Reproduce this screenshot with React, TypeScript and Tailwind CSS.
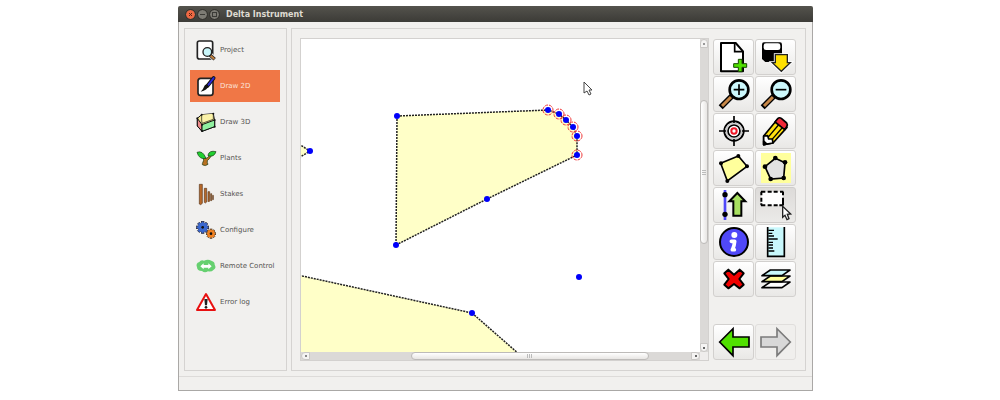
import { useState } from "react";
import type { ReactNode } from "react";

type NavItem = { label: string; icon: ReactNode };
type Tool = { label: string; icon: ReactNode; pressed?: boolean; disabled?: boolean };

const GEAR_ANGLES = Array.from({ length: 8 }, (_, i) => i * 45);

const navItems: NavItem[] = [
  {
    label: "Project",
    icon: (
      <>
        <rect x="4" y="3" width="46" height="54" rx="6" fill="#fff" stroke="#222" strokeWidth="5" />
        <path d="M41 43 L57 59" stroke="#f1f0ee" strokeWidth="15" />
        <path d="M41 44 L56 58" stroke="#222" strokeWidth="10" />
        <path d="M44 47 L55 57" stroke="#c08040" strokeWidth="6" />
        <circle cx="34" cy="36" r="13" fill="#c8f6fa" stroke="#222" strokeWidth="4" />
      </>
    ),
  },
  {
    label: "Draw 2D",
    icon: (
      <>
        <rect x="6" y="7" width="45" height="51" rx="8" fill="#fff" stroke="#222" strokeWidth="5" />
        <path d="M53 6 L34 30" stroke="#111" strokeWidth="11" strokeLinecap="round" />
        <path d="M53 6 L37 27" stroke="#2a2ad8" strokeWidth="6" strokeLinecap="round" />
        <path d="M38 30 Q34 42 14 47 Q22 40 24 32 Q27 24 34 26Z" fill="#111" />
      </>
    ),
  },
  {
    label: "Draw 3D",
    icon: (
      <g stroke="#111" strokeWidth="3" strokeLinejoin="round">
        <path d="M4 19 L17 8 L52 5 L56 27 V44 L18 58 L4 42Z" fill="#f4e890" />
        <path d="M17 8 V24 L18 34 L52 22 V5" fill="#fbf3a8" strokeWidth="2" />
        <path d="M4 19 L18 38 V58 L4 42Z" fill="#ee8c8c" />
        <path d="M18 38 L56 24 V44 L18 58Z" fill="#90f0a0" />
        <g fill="#111" stroke="none">
          <circle cx="4" cy="19" r="3" />
          <circle cx="17" cy="8" r="3" />
          <circle cx="52" cy="5" r="3" />
          <circle cx="56" cy="24" r="3" />
          <circle cx="18" cy="38" r="3" />
          <circle cx="18" cy="57" r="3" />
          <circle cx="56" cy="44" r="3" />
        </g>
      </g>
    ),
  },
  {
    label: "Plants",
    icon: (
      <g stroke="#173a10" strokeWidth="2">
        <path d="M19 47 Q25 38 22 27 L30 31 Q38 30 42 18 L47 22 Q40 34 34 38 Q33 44 36 49 Q28 56 19 50Z" fill="#b87020" />
        <path d="M3 13 Q20 6 30 31 Q10 36 3 13Z" fill="#20d030" />
        <path d="M36 21 Q40 6 60 11 Q54 29 36 23Z" fill="#20d030" />
      </g>
    ),
  },
  {
    label: "Stakes",
    icon: (
      <g fill="#b86828" stroke="#5a3a20" strokeWidth="2">
        <path d="M10 1 H19 V58 L14 62 L10 60Z" />
        <path d="M25 13 H32 V54 L28 57 L25 55Z" />
        <path d="M36 23 H41 V51 L38 54 L36 52Z" />
        <path d="M44 29 H47 V50 H44Z" />
        <path d="M50 34 H52 V47 H50Z" />
      </g>
    ),
  },
  {
    label: "Configure",
    icon: (
      <>
        {GEAR_ANGLES.map((a) => (
          <rect key={a} x="16" y="4" width="8" height="9" fill="#3a64c8" stroke="#223" strokeWidth="2" transform={`rotate(${a} 20 22)`} />
        ))}
        <circle cx="20" cy="22" r="14" fill="#3a68d0" />
        <circle cx="20" cy="22" r="4" fill="#111" />
        {GEAR_ANGLES.map((a) => (
          <rect key={a} x="42" y="27" width="6" height="8" fill="#f08020" stroke="#432" strokeWidth="2" transform={`rotate(${a} 45 41)`} />
        ))}
        <circle cx="45" cy="41" r="11" fill="#f08020" />
        <circle cx="45" cy="41" r="4" fill="#111" />
      </>
    ),
  },
  {
    label: "Remote Control",
    icon: (
      <>
        <path
          d="M10 18 Q14 11 24 14 Q36 8 46 14 Q57 17 56 26 Q62 36 53 41 Q46 49 36 46 Q26 52 18 45 Q3 45 3 34 Q-2 22 10 18Z"
          fill="#66d070"
        />
        <path d="M13 31 L23 22 V27 H37 V22 L47 31 L37 40 V35 H23 V40Z" fill="#fff" />
      </>
    ),
  },
  {
    label: "Error log",
    icon: (
      <>
        <path d="M30 6 L57 54 H3Z" fill="#fff" stroke="#e81010" strokeWidth="6" strokeLinejoin="round" />
        <path d="M25 21 H35 L33 40 H27Z" fill="#222" />
        <circle cx="30" cy="46" r="4" fill="#222" />
      </>
    ),
  },
];

const magnifier = (
  <>
    <path d="M38 52 L5 85" stroke="#000" strokeWidth="17" />
    <path d="M36 54 L9 81" stroke="#c88848" strokeWidth="9" />
    <circle cx="60" cy="32" r="28" fill="#ccf8fc" stroke="#000" strokeWidth="8" />
  </>
);

const leftArrow = "M2 45 L42 5 V30 H90 V60 H42 V86Z";

const tools: Tool[] = [
  {
    label: "New",
    icon: (
      <>
        <path d="M6 3 H50 L72 28 V88 H6Z" fill="#fff" stroke="#000" strokeWidth="6" strokeLinejoin="round" />
        <path d="M47 4 V29 H71" fill="none" stroke="#000" strokeWidth="5" />
        <path d="M58 52 H69 V65 H83 V76 H69 V89 H58 V76 H44 V65 H58Z" fill="#50e000" stroke="#164a00" strokeWidth="3" />
      </>
    ),
  },
  {
    label: "Save",
    icon: (
      <>
        <path d="M3 8 Q3 1 9 1 H57 Q63 1 63 8 V60 H13 L3 51Z" fill="#000" />
        <rect x="8" y="4" width="50" height="20" rx="7" fill="#fff" />
        <path d="M43 38 H79 V62 H88 L61 88 L34 62 H43Z" fill="#ffe000" stroke="#fff" strokeWidth="9" />
        <path d="M43 38 H79 V62 H88 L61 88 L34 62 H43Z" fill="#ffe000" stroke="#222" strokeWidth="4" />
      </>
    ),
  },
  {
    label: "Zoom in",
    icon: (
      <>
        {magnifier}
        <path d="M44 32 H76 M60 16 V48" stroke="#000" strokeWidth="5" />
      </>
    ),
  },
  {
    label: "Zoom out",
    icon: (
      <>
        {magnifier}
        <path d="M44 32 H76" stroke="#000" strokeWidth="5" />
      </>
    ),
  },
  {
    label: "Center view",
    icon: (
      <g fill="none" strokeWidth="5">
        <circle cx="45" cy="45" r="29" fill="#fff" stroke="#000" strokeWidth="6" />
        <circle cx="45" cy="45" r="24" stroke="#ccc" />
        <circle cx="45" cy="45" r="18" stroke="#000" />
        <circle cx="45" cy="45" r="8" stroke="#f01828" strokeWidth="6" />
        <path d="M0 45 H21 M69 45 H90 M45 0 V21 M45 69 V90" stroke="#000" />
      </g>
    ),
  },
  {
    label: "Edit",
    icon: (
      <g stroke="#000" strokeWidth="5" strokeLinejoin="round">
        <path d="M8 86 V60 L50 9 L78 34 L36 81Z" fill="#ffe010" />
        <path d="M21 64 L60 18" strokeWidth="4" />
        <path d="M30 74 L71 27" strokeWidth="4" />
        <path d="M42 18 L50 8 Q55 3 61 7 L77 21 Q81 26 77 32 L71 41Z" fill="#f02838" />
        <path d="M8 86 V60 L20 59 L23 69 L34 69 L36 81Z" fill="#fff" />
        <path d="M8 86 V75 L18 84Z" fill="#000" />
      </g>
    ),
  },
  {
    label: "Polygon",
    icon: (
      <>
        <path d="M5 31 L58 9 L84 40 L25 84Z" fill="#ffff9c" stroke="#000" strokeWidth="5" />
        <circle cx="6" cy="31" r="6" />
        <circle cx="58" cy="9" r="6" />
        <circle cx="84" cy="40" r="6" />
        <circle cx="25" cy="84" r="6" />
      </>
    ),
  },
  {
    label: "Hole",
    icon: (
      <>
        <rect width="90" height="90" fill="#ffff9c" />
        <path d="M43 16 L72 29 L68 75 L29 78 L12 41Z" fill="#e2e2e2" stroke="#000" strokeWidth="5" />
        <circle cx="43" cy="15" r="7" />
        <circle cx="72" cy="28" r="7" />
        <circle cx="68" cy="75" r="7" />
        <circle cx="29" cy="78" r="7" />
        <circle cx="12" cy="41" r="7" />
      </>
    ),
  },
  {
    label: "Move line",
    icon: (
      <>
        <path d="M18 0 V90" stroke="#5048f8" strokeWidth="8" />
        <circle cx="18" cy="14" r="8" />
        <circle cx="18" cy="73" r="8" />
        <path d="M55 9 L79 34 H67 V77 H43 V34 H31Z" fill="#a8e060" stroke="#000" strokeWidth="6" />
      </>
    ),
  },
  {
    label: "Select",
    pressed: true,
    icon: (
      <>
        <rect x="1" y="5" width="65" height="41" fill="#fff" />
        <path
          d="M0 5 H13 M20 5 H32 M38 5 H50 M57 5 H67 M0 46 H13 M20 46 H32 M38 46 H50 M55 46 H67 M1 5 V16 M1 23 V35 M1 40 V46 M66 5 V16 M66 23 V46"
          stroke="#000"
          strokeWidth="6"
        />
        <path d="M65 49 V82 L72 76 L78 89 L84 86 L79 73 L89 72Z" fill="#fff" stroke="#222" strokeWidth="4" />
      </>
    ),
  },
  {
    label: "Info",
    icon: (
      <>
        <circle cx="45" cy="45" r="42" fill="#5048f8" stroke="#000" strokeWidth="6" />
        <circle cx="46" cy="24" r="9" fill="#fff" />
        <path d="M37 43 H47 Q46 56 41 67 M40 68 H46" fill="none" stroke="#fff" strokeWidth="11" strokeLinecap="round" strokeLinejoin="round" />
      </>
    ),
  },
  {
    label: "Measure",
    icon: (
      <>
        <rect x="20" y="1" width="50" height="86" fill="#c8f8fc" />
        <path d="M20 0 V88 H70 V0" fill="none" stroke="#000" strokeWidth="5" />
        <path d="M22 10 H39 M22 19 H34 M22 27 H39 M22 36 H50 M22 46 H36 M22 54 H36 M22 63 H36 M22 72 H40" stroke="#000" strokeWidth="4" />
      </>
    ),
  },
  {
    label: "Delete",
    icon: (
      <path
        d="M28 17 L45 32 L62 17 L74 28 L61 45 L74 62 L62 73 L45 60 L28 73 L16 62 L29 45 L16 28Z"
        fill="#f00000"
        stroke="#000"
        strokeWidth="6"
        strokeLinejoin="round"
      />
    ),
  },
  {
    label: "Layers",
    icon: (
      <g stroke="#000" strokeWidth="5" strokeLinejoin="round">
        <path d="M28 54 H87 L63 71 H3Z" fill="#fff" />
        <path d="M28 36 H87 L63 53 H3Z" fill="#ffff9c" />
        <path d="M28 18 H87 L63 35 H3Z" fill="#c8f8fc" />
      </g>
    ),
  },
];

const history: Tool[] = [
  { label: "Undo", icon: <path d={leftArrow} fill="#50e000" stroke="#000" strokeWidth="5" /> },
  {
    label: "Redo",
    disabled: true,
    icon: <path d={leftArrow} transform="translate(90 0) scale(-1 1)" fill="#d8d8d8" stroke="#7b7b7b" strokeWidth="5" />,
  },
];

const selectedNodes = [[247, 71], [258, 75], [265, 81], [272, 88], [276, 97], [276, 116]];
const plainNodes = [[96, 77], [186, 160], [95, 206], [278, 238], [171, 274], [9, 112]];

function ToolButton({ tool }: { tool: Tool }) {
  return (
    <button
      type="button"
      aria-label={tool.label}
      aria-pressed={tool.pressed}
      disabled={tool.disabled}
      className={
        tool.disabled
          ? "flex h-9 items-center justify-center rounded-[3px] border border-[#e0dedc] bg-[#f0efed]"
          : tool.pressed
            ? "flex h-9 items-center justify-center rounded-[3px] border border-[#cfcdcb] bg-gradient-to-b from-[#dddbd9] to-[#ebeae8]"
            : "flex h-9 items-center justify-center rounded-[3px] border border-[#d2d0ce] bg-gradient-to-b from-white to-[#e9e8e6]"
      }
    >
      <svg viewBox="0 0 90 90" className="size-[30px] overflow-visible">
        {tool.icon}
      </svg>
    </button>
  );
}

function TitleBar() {
  return (
    <header className="flex h-4 items-center gap-[3px] rounded-t-[2px] bg-gradient-to-b from-[#54534d] to-[#3c3b37] px-2">
      <button type="button" aria-label="Close" className="size-[9px] rounded-full bg-[#ee6843] outline outline-[#35332f]">
        <svg viewBox="0 0 9 9" className="size-[9px]">
          <path d="M3 3 L6 6 M6 3 L3 6" stroke="#5a2414" />
        </svg>
      </button>
      <button type="button" aria-label="Minimize" className="size-[9px] rounded-full bg-[#7d7b74] outline outline-[#35332f]">
        <svg viewBox="0 0 9 9" className="size-[9px]">
          <path d="M2 4.500 H7" stroke="#3c3b37" />
        </svg>
      </button>
      <button type="button" aria-label="Maximize" className="size-[9px] rounded-full bg-[#7d7b74] outline outline-[#35332f]">
        <svg viewBox="0 0 9 9" className="size-[9px]">
          <rect x="2.500" y="2.500" width="4" height="4" fill="none" stroke="#3c3b37" />
        </svg>
      </button>
      <h1 className="ml-1 pt-px text-[8px] leading-4 font-bold whitespace-nowrap text-[#dfdbd2]">Delta Instrument</h1>
    </header>
  );
}

function DrawingArea() {
  return (
    <div className="grid min-w-0 flex-1 grid-cols-[1fr_8px] grid-rows-[1fr_8px] bg-[#efedec] outline outline-[#d3d1cf]">
      <div className="relative overflow-hidden bg-white">
        <svg className="absolute inset-0 size-full">
          <g fill="#ffffc8" stroke="#222" strokeWidth="1.500" strokeDasharray="2 1">
            <path d="M96 77 L247 71 L258 75 L265 81 L272 88 L276 97 V116 L186 160 L95 206Z" />
            <path d="M-40 228 L171 274 L250 343 V400 H-40Z" />
            <path d="M-20 94 L9 112 L-20 130Z" />
          </g>
          {plainNodes.map(([x, y]) => (
            <circle key={`${x}-${y}`} cx={x} cy={y} r="3" fill="#0000fa" />
          ))}
          {selectedNodes.map(([x, y]) => (
            <g key={`${x}-${y}`}>
              <circle cx={x} cy={y} r="5" fill="none" stroke="#f03838" strokeDasharray="3 1" />
              <circle cx={x} cy={y} r="3" fill="#0000fa" />
            </g>
          ))}
          <path d="M283 43 V54 L286 52 L288 56 L290 55 L288 51 H291Z" fill="#fff" stroke="#444" />
        </svg>
      </div>

      {/* Vertical scrollbar */}
      <div className="flex flex-col bg-[#dbd9d7]">
        <button type="button" aria-label="Scroll up" className="flex h-[9px] items-center justify-center rounded-t-full border border-[#c9c7c5] bg-[#f5f4f3]">
          <span className="size-[2px] bg-[#999]" />
        </button>
        <div className="flex-[52]" />
        <div className="flex flex-[143] flex-col items-center justify-center gap-px rounded-full border border-[#bdbbb9] bg-gradient-to-r from-white to-[#e8e6e4]">
          <span className="h-px w-1 bg-[#bbb]" />
          <span className="h-px w-1 bg-[#bbb]" />
          <span className="h-px w-1 bg-[#bbb]" />
        </div>
        <div className="flex-[99]" />
        <button type="button" aria-label="Scroll down" className="flex h-[9px] items-center justify-center rounded-b-full border border-[#c9c7c5] bg-[#f5f4f3]">
          <span className="size-[2px] bg-[#666]" />
        </button>
      </div>

      {/* Horizontal scrollbar */}
      <div className="flex bg-[#dbd9d7]">
        <button type="button" aria-label="Scroll left" className="flex w-[9px] items-center justify-center rounded-l-full border border-[#c9c7c5] bg-[#f5f4f3]">
          <span className="size-[2px] bg-[#888]" />
        </button>
        <div className="flex-[101]" />
        <div className="flex flex-[237] items-center justify-center gap-px rounded-full border border-[#bdbbb9] bg-gradient-to-b from-white to-[#e8e6e4]">
          <span className="h-1 w-px bg-[#bbb]" />
          <span className="h-1 w-px bg-[#bbb]" />
          <span className="h-1 w-px bg-[#bbb]" />
        </div>
        <div className="flex-[42]" />
        <button type="button" aria-label="Scroll right" className="flex w-[9px] items-center justify-center rounded-r-full border border-[#c9c7c5] bg-[#f5f4f3]">
          <span className="size-[2px] bg-[#666]" />
        </button>
      </div>
    </div>
  );
}

export default function App() {
  const [active, setActive] = useState("Draw 2D");

  return (
    <div className="min-h-screen bg-white pt-[6px] pr-[187px] pl-[178px] font-['DejaVu_Sans',sans-serif]">
      <div className="rounded-t-[2px] bg-[#f1f0ee]">
        <TitleBar />
        <div className="border border-t-0 border-[#aaa8a6]">
          <div className="flex gap-1 pt-[6px] pr-[6px] pb-[5px] pl-[5px]">
            <nav className="flex w-[103px] shrink-0 flex-col gap-1 border border-[#d5d3d1] py-[5px] pr-[6px] pl-[5px]">
              {navItems.map((item) => (
                <button
                  key={item.label}
                  type="button"
                  onClick={() => setActive(item.label)}
                  className={
                    item.label === active
                      ? "flex h-8 items-center gap-1 bg-[#f07746] px-[6px] text-[7px] whitespace-nowrap text-[#fbe3da]"
                      : "flex h-8 items-center gap-1 px-[6px] text-[7px] whitespace-nowrap text-[#575553]"
                  }
                >
                  <svg viewBox="0 0 60 60" className="size-5 shrink-0 overflow-visible" fill="none">
                    {item.icon}
                  </svg>
                  {item.label}
                </button>
              ))}
            </nav>

            <main className="flex min-w-0 flex-1 gap-[5px] border border-[#d5d3d1] px-[9px] py-[10px]">
              <DrawingArea />
              <aside className="w-[83px] shrink-0">
                <div className="grid grid-cols-2 gap-x-px gap-y-px">
                  {tools.map((tool) => (
                    <ToolButton key={tool.label} tool={tool} />
                  ))}
                </div>
                <div className="mt-[27px] grid grid-cols-2 gap-x-px">
                  {history.map((tool) => (
                    <ToolButton key={tool.label} tool={tool} />
                  ))}
                </div>
              </aside>
            </main>
          </div>
          <footer className="h-[14px] border-t border-[#dddbd9]" />
        </div>
      </div>
    </div>
  );
}
